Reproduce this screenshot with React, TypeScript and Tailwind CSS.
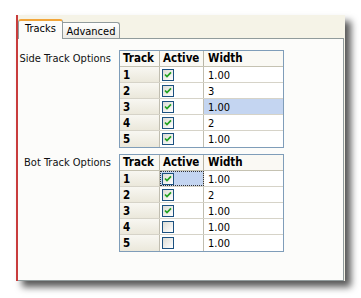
import React from "react";

type Row = { n: number; checked: boolean; width: string; hlWidth?: boolean; hlActive?: boolean };

const side: Row[] = [
  { n: 1, checked: true, width: "1.00" },
  { n: 2, checked: true, width: "3" },
  { n: 3, checked: true, width: "1.00", hlWidth: true },
  { n: 4, checked: true, width: "2" },
  { n: 5, checked: true, width: "1.00" },
];

const bot: Row[] = [
  { n: 1, checked: true, width: "1.00", hlActive: true },
  { n: 2, checked: true, width: "2" },
  { n: 3, checked: true, width: "1.00" },
  { n: 4, checked: false, width: "1.00" },
  { n: 5, checked: false, width: "1.00" },
];

function Check({ checked }: { checked: boolean }) {
  return (
    <div className="w-[12px] h-[12px] border border-[#1c5180] bg-gradient-to-br from-[#dcdcd5] to-white flex items-center justify-center">
      {checked && (
        <svg width="8" height="8" viewBox="0 0 8 8">
          <path d="M1 3.5 L3 5.6 L7 1.4" stroke="#21a121" strokeWidth="1.7" fill="none" />
        </svg>
      )}
    </div>
  );
}

function Table({ rows }: { rows: Row[] }) {
  return (
    <div className="border border-[#7f9db9] w-[165px] bg-white">
      <div className="flex h-[16px] border-b border-[#c5c2b2] bg-[#faf9f4] font-bold text-[11.5px]">
        <div className="w-[40px] border-r border-[#b8b5a6] pl-[3px] leading-[15px]">Track</div>
        <div className="w-[44px] border-r border-[#b8b5a6] pl-[3px] leading-[15px]">Active</div>
        <div className="w-[79px] pl-[4px] leading-[15px]">Width</div>
      </div>
      {rows.map((r, i) => (
        <div
          key={r.n}
          className={`flex h-[16px] ${i < rows.length - 1 ? "border-b border-[#d6d3c8]" : ""}`}
        >
          <div className="w-[40px] border-r border-[#c0bdb0] pl-[3px] leading-[17px] font-bold text-[11.5px] bg-gradient-to-b from-[#f8f7f2] to-[#ebe8db]">
            {r.n}
          </div>
          <div
            className={`w-[44px] border-r border-[#c0bdb0] flex items-center pl-[2px] ${
              r.hlActive ? "bg-[#c4d5f1] outline-1 outline-dotted outline-[#333] -outline-offset-1" : ""
            }`}
          >
            <Check checked={r.checked} />
          </div>
          <div className={`w-[79px] pl-[4px] leading-[17px] ${r.hlWidth ? "bg-[#c4d5f1]" : ""}`}>{r.width}</div>
        </div>
      ))}
    </div>
  );
}

function Section({ label, rows }: { label: string; rows: Row[] }) {
  return (
    <div className="flex">
      <div className="w-[93px] text-right leading-[14px] pt-[2px] text-[#111]">{label}</div>
      <div className="ml-[8px]">
        <Table rows={rows} />
      </div>
    </div>
  );
}

export default function App() {
  return (
    <div
      className="w-[361px] h-[298px] bg-white pt-[15px] pl-[16px] text-[11px] text-black"
      style={{ fontFamily: '"DejaVu Sans Condensed", "DejaVu Sans", sans-serif' }}
    >
      <div className="w-[329px] h-[266px] flex flex-col border-l-2 border-[#c83c3c] bg-[#f5f3e7] shadow-[6px_6px_7px_rgba(0,0,0,0.65)]">
        <div className="h-[23px] flex items-end relative z-10">
          <div className="w-[45px] h-[20px] -mb-px bg-[#fcfcfa] border-x border-[#919b9c] border-t-2 border-t-[#f2a53a] rounded-t-[3px] text-center leading-[16px]">
            Tracks
          </div>
          <div className="w-[57px] h-[16px] bg-gradient-to-b from-white to-[#ecebe5] border-t border-r border-[#919b9c] rounded-tr-[3px] text-center leading-[17px]">
            Advanced
          </div>
        </div>
        <div className="flex-1 border-t border-r border-b border-[#919b9c] bg-[#fcfcfa] mr-[1px] pt-[11px] flex flex-col gap-[6px]">
          <Section label="Side Track Options" rows={side} />
          <Section label="Bot Track Options" rows={bot} />
        </div>
      </div>
    </div>
  );
}
